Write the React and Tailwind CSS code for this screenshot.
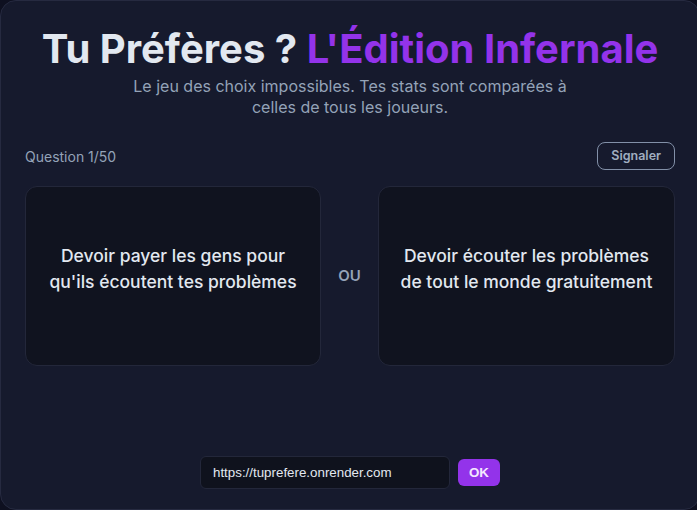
import React from "react";

const OPTIONS = [
  "Devoir payer les gens pour qu'ils écoutent tes problèmes",
  "Devoir écouter les problèmes de tout le monde gratuitement",
];

function ChoiceCard({ text }) {
  return (
    <button className="h-[180px] rounded-xl border border-[#23273a] bg-[#10131f] px-[18px] pb-[14px] flex items-center justify-center text-center text-[17.5px] leading-[26px] font-medium text-[#e2e8f0]">
      {text}
    </button>
  );
}

export default function App() {
  return (
    <div className="w-[697px] h-[510px] overflow-hidden bg-[#0e1020] font-['Inter',sans-serif]">
      <div className="w-[700px] h-full rounded-2xl border border-[#262a40] bg-[#161a2d] px-[24px] pt-[25px] pb-[20px] flex flex-col">
        <h1 className="text-center text-[40px] leading-[46px] font-bold text-[#e2e8f0]">
          Tu Préfères ? <span className="text-[#9333ea]">L'Édition Infernale</span>
        </h1>
        <p className="mx-auto mt-[4px] max-w-[450px] text-center text-[16px] leading-[21px] text-[#94a3b8]">
          Le jeu des choix impossibles. Tes stats sont comparées à celles de tous les joueurs.
        </p>

        <div className="mt-[24px] flex items-center justify-between">
          <span className="text-[14px] text-[#94a3b8]">Question 1/50</span>
          <button className="h-[28px] px-[13px] rounded-lg border border-[#8290a8] text-[12.5px] font-semibold text-[#a0aec0]">
            Signaler
          </button>
        </div>

        <div className="mt-[16px] grid grid-cols-[296px_1fr_297px] items-center">
          <ChoiceCard text={OPTIONS[0]} />
          <div className="text-center text-[15px] font-semibold text-[#94a3b8]">OU</div>
          <ChoiceCard text={OPTIONS[1]} />
        </div>

        <div className="mt-auto flex items-center justify-center gap-[8px]">
          <input
            readOnly
            value="https://tuprefere.onrender.com"
            className="w-[250px] h-[33px] rounded-md border border-[#23273a] bg-[#0f121d] px-[12px] text-[13.33px] text-[#e2e8f0] font-['Liberation_Sans',Arial,sans-serif] outline-none"
          />
          <button className="h-[27px] px-[11px] rounded-md bg-[#9333ea] text-[13.33px] font-bold text-[#f3e8ff] font-['Liberation_Sans',Arial,sans-serif]">
            OK
          </button>
        </div>
      </div>
    </div>
  );
}
